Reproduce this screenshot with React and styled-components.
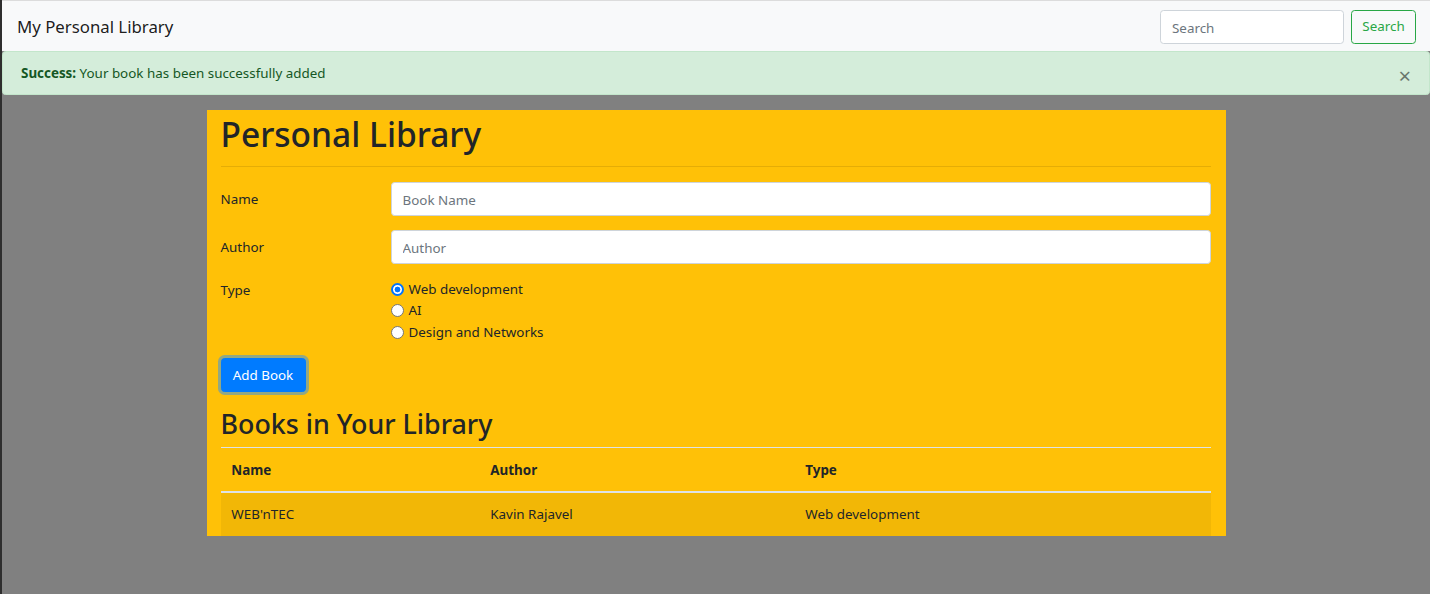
import React from "react";
import styled, { createGlobalStyle } from "styled-components";

const Global = createGlobalStyle`
  html, body { margin: 0; padding: 0; }
  body {
    background: #808080;
    font-family: "Noto Sans", "Open Sans", sans-serif;
    font-size: 13.4px;
    line-height: 21.6px;
    color: #212529;
  }
  * { box-sizing: border-box; }
`;

const Page = styled.div`
  min-height: 594px;
  border-left: 2px solid #2e2e2e;
  background: #808080;
`;

const Navbar = styled.nav`
  display: flex;
  align-items: center;
  justify-content: space-between;
  height: 51px;
  padding: 0 14px 0 15px;
  background: #f8f9fa;
  border-top: 1px solid #dcdcdc;
`;

const Brand = styled.div`
  font-size: 16.8px;
  line-height: 27px;
  color: rgba(0, 0, 0, 0.9);
`;

const SearchForm = styled.form`
  display: flex;
  align-items: center;
  gap: 7px;
  margin-top: 1px;
`;

const SearchInput = styled.input`
  width: 184px;
  height: 34px;
  padding: 6px 11px 4px;
  font: inherit;
  color: #495057;
  background: #fff;
  border: 1px solid #ced4da;
  border-radius: 3.6px;
  outline: none;
  &::placeholder { color: #6c757d; }
`;

const OutlineButton = styled.button`
  height: 34px;
  width: 65px;
  padding: 1px 0 0;
  font: inherit;
  color: #28a745;
  background: transparent;
  border: 1px solid #28a745;
  border-radius: 3.6px;
`;

const Alert = styled.div`
  position: relative;
  display: flex;
  align-items: center;
  height: 44px;
  padding: 2px 18px 0;
  margin-bottom: 15px;
  color: #155724;
  background: #d4edda;
  border: 1px solid #c3e6cb;
  border-radius: 3.6px;
`;

const CloseBtn = styled.button`
  position: absolute;
  right: 18px;
  top: 50%;
  transform: translateY(-50%);
  padding: 0;
  border: 0;
  background: transparent;
  font-family: "Noto Sans", sans-serif;
  font-size: 22px;
  font-weight: 400;
  line-height: 1;
  color: #000;
  opacity: 0.5;
  margin-top: 2px;
`;

const Container = styled.main`
  width: 1019px;
  margin: 0 auto;
  padding: 0 15px 0 14px;
  background: #ffc107;
`;

const Title = styled.h1`
  margin: 0;
  font-size: 33.5px;
  font-weight: 500;
  line-height: 48px;
  color: #212529;
`;

const Rule = styled.hr`
  margin: 8px 0 15px;
  border: 0;
  border-top: 1px solid rgba(0, 0, 0, 0.1);
`;

const FormRow = styled.div`
  display: grid;
  grid-template-columns: 170px 1fr;
  align-items: ${(p) => (p.$top ? "start" : "center")};
  margin-bottom: 14.4px;
`;

const Label = styled.label`
  line-height: 21.6px;
  padding-top: 1px;
`;

const TextInput = styled.input`
  height: 34px;
  width: 100%;
  padding: 6px 11px 4px;
  font: inherit;
  color: #495057;
  background: #fff;
  border: 1px solid #ced4da;
  border-radius: 3.6px;
  outline: none;
  &::placeholder { color: #6c757d; }
`;

const RadioList = styled.div`
  display: flex;
  flex-direction: column;
`;

const RadioItem = styled.label`
  display: flex;
  align-items: center;
  gap: 5px;
  height: 21.6px;
`;

const Radio = styled.input.attrs({ type: "radio" })`
  appearance: none;
  margin: 0 0 1px;
  width: 13px;
  height: 13px;
  border-radius: 50%;
  border: 1px solid #767676;
  background: #fff;
  &:checked {
    border: 2px solid #0075ff;
    background: radial-gradient(circle, #0075ff 0 2.6px, #fff 3.2px);
  }
`;

const PrimaryButton = styled.button`
  height: 34px;
  width: 85px;
  padding: 1px 0 0;
  font: inherit;
  color: #fff;
  background: #007bff;
  border: 1px solid #007bff;
  border-radius: 3.6px;
  box-shadow: 0 0 0 3px rgba(38, 143, 255, 0.5);
`;

const SubTitle = styled.h2`
  margin: 14px 0 6px;
  padding-top: 1px;
  font-size: 26.8px;
  font-weight: 500;
  line-height: 34.6px;
`;

const Table = styled.table`
  width: 100%;
  border-collapse: collapse;
  margin-top: -1px;
`;

const Th = styled.th`
  text-align: left;
  font-weight: 700;
  padding: 12.3px 10.8px 9.3px;
  line-height: 21.6px;
  border-top: 1px solid #dee2e6;
  border-bottom: 2px solid #dee2e6;
  width: ${(p) => p.$w}px;
`;

const Tr = styled.tr`
  background: ${(p) => (p.$striped ? "rgba(0,0,0,0.05)" : "transparent")};
`;

const Td = styled.td`
  padding: 10.8px;
  line-height: 21.6px;
`;

export default function App() {
  return (
    <Page>
      <Global />
      <Navbar>
        <Brand>My Personal Library</Brand>
        <SearchForm onSubmit={(e) => e.preventDefault()}>
          <SearchInput placeholder="Search" />
          <OutlineButton type="submit">Search</OutlineButton>
        </SearchForm>
      </Navbar>
      <Alert>
        <span>
          <strong>Success:</strong> Your book has been successfully added
        </span>
        <CloseBtn aria-label="Close">×</CloseBtn>
      </Alert>
      <Container>
        <Title>Personal Library</Title>
        <Rule />
        <FormRow>
          <Label>Name</Label>
          <TextInput placeholder="Book Name" />
        </FormRow>
        <FormRow>
          <Label>Author</Label>
          <TextInput placeholder="Author" />
        </FormRow>
        <FormRow $top>
          <Label>Type</Label>
          <RadioList>
            <RadioItem>
              <Radio name="type" defaultChecked />
              Web development
            </RadioItem>
            <RadioItem>
              <Radio name="type" />
              AI
            </RadioItem>
            <RadioItem>
              <Radio name="type" />
              Design and Networks
            </RadioItem>
          </RadioList>
        </FormRow>
        <div>
          <PrimaryButton>Add Book</PrimaryButton>
        </div>
        <SubTitle>Books in Your Library</SubTitle>
        <Table>
          <thead>
            <tr>
              <Th $w={259}>Name</Th>
              <Th $w={315}>Author</Th>
              <Th>Type</Th>
            </tr>
          </thead>
          <tbody>
            <Tr $striped>
              <Td>WEB'nTEC</Td>
              <Td>Kavin Rajavel</Td>
              <Td>Web development</Td>
            </Tr>
          </tbody>
        </Table>
      </Container>
    </Page>
  );
}
